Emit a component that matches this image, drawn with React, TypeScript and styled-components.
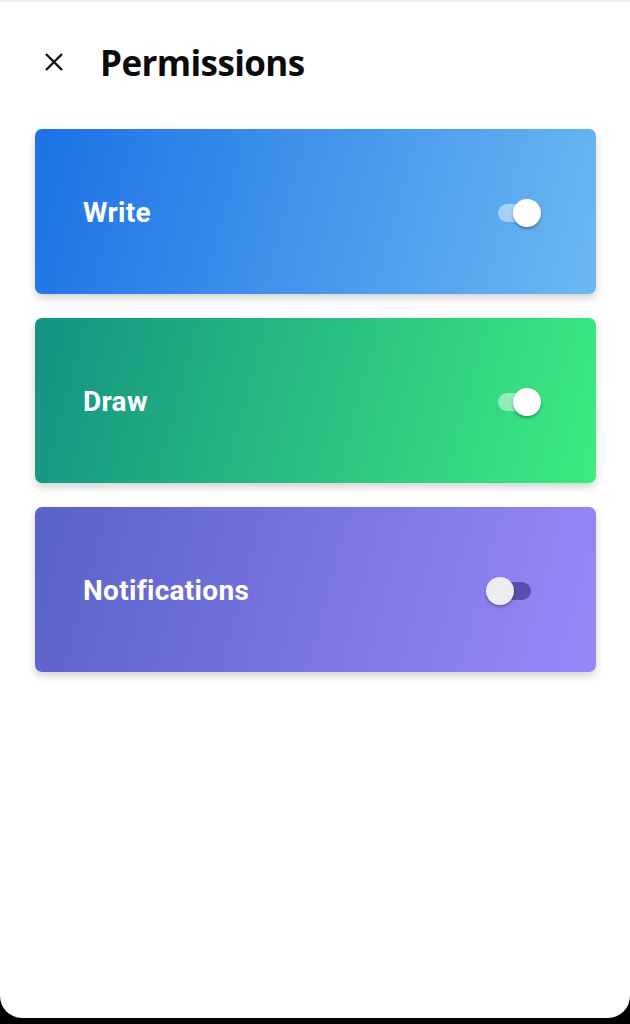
import React, { useState } from 'react';
import styled, { createGlobalStyle } from 'styled-components';

const GlobalStyle = createGlobalStyle`
  html, body {
    margin: 0;
    padding: 0;
    background: #000;
  }
  * {
    box-sizing: border-box;
  }
`;

type Permission = {
  id: string;
  label: string;
  from: string;
  to: string;
  enabled: boolean;
};

const permissions: Permission[] = [
  { id: 'write', label: 'Write', from: '#1c72e6', to: '#6bb8f2', enabled: true },
  { id: 'draw', label: 'Draw', from: '#159283', to: '#3cec80', enabled: true },
  { id: 'notifications', label: 'Notifications', from: '#5a62c8', to: '#9888f9', enabled: false },
];

export default function App() {
  const [state, setState] = useState<Record<string, boolean>>(
    Object.fromEntries(permissions.map((p) => [p.id, p.enabled]))
  );

  return (
    <>
      <GlobalStyle />
      <Screen>
        <Header>
          <CloseButton aria-label="close">
            <svg width="22" height="22" viewBox="0 0 22 22">
              <path d="M3 3 L19 19 M19 3 L3 19" stroke="#111" strokeWidth="2.4" strokeLinecap="butt" />
            </svg>
          </CloseButton>
          <Title>Permissions</Title>
        </Header>
        <CardList>
          {permissions.map((p) => (
            <Card key={p.id} from={p.from} to={p.to}>
              <Label>{p.label}</Label>
              <Switch
                on={state[p.id]}
                onClick={() => setState((s) => ({ ...s, [p.id]: !s[p.id] }))}
              >
                <Track on={state[p.id]} />
                <Thumb on={state[p.id]} />
              </Switch>
            </Card>
          ))}
        </CardList>
      </Screen>
    </>
  );
}

const Screen = styled.div`
  height: 1018px;
  background: #fff;
  border-top: 2px solid #ececec;
  border-radius: 0 0 22px 22px;
  overflow: hidden;
`;

const Header = styled.div`
  display: flex;
  align-items: center;
  height: 120px;
  padding: 0 0 0 43px;
`;

const CloseButton = styled.button`
  display: flex;
  align-items: center;
  justify-content: center;
  width: 22px;
  height: 22px;
  padding: 0;
  border: none;
  background: none;
  margin-right: 35px;
  cursor: pointer;
`;

const Title = styled.h1`
  margin: 0;
  font-family: 'Open Sans', 'DejaVu Sans', sans-serif;
  font-weight: 700;
  font-size: 35px;
  letter-spacing: -0.6px;
  color: #0b0b0b;
`;

const CardList = styled.div`
  display: flex;
  flex-direction: column;
  gap: 24px;
  padding: 7px 34px 0 35px;
`;

const Card = styled.div<{ from: string; to: string }>`
  display: flex;
  align-items: center;
  justify-content: space-between;
  height: 165px;
  padding: 0 54px 0 48px;
  border-radius: 7px;
  background: linear-gradient(105deg, ${({ from }) => from} 0%, ${({ to }) => to} 100%);
  box-shadow: 0 4px 8px rgba(0, 0, 0, 0.18);
`;

const Label = styled.span`
  font-family: Roboto, 'Liberation Sans', sans-serif;
  font-weight: 700;
  font-size: 28px;
  letter-spacing: 0.3px;
  color: #fff;
  padding-top: 2px;
`;

const Switch = styled.div<{ on: boolean }>`
  position: relative;
  width: 46px;
  height: 30px;
  margin-top: 2px;
  margin-right: ${({ on }) => (on ? '0' : '9px')};
  cursor: pointer;
`;

const Track = styled.div<{ on: boolean }>`
  position: absolute;
  left: 2px;
  right: 2px;
  top: 6px;
  height: 18px;
  border-radius: 9px;
  background: ${({ on }) => (on ? 'rgba(255, 255, 255, 0.45)' : 'rgba(70, 60, 150, 0.75)')};
`;

const Thumb = styled.div<{ on: boolean }>`
  position: absolute;
  top: 1px;
  left: ${({ on }) => (on ? '17px' : '-1px')};
  width: 28px;
  height: 28px;
  border-radius: 50%;
  background: ${({ on }) => (on ? '#ffffff' : '#eeeef2')};
  box-shadow: 0 2px 3px rgba(0, 0, 0, 0.3);
`;
